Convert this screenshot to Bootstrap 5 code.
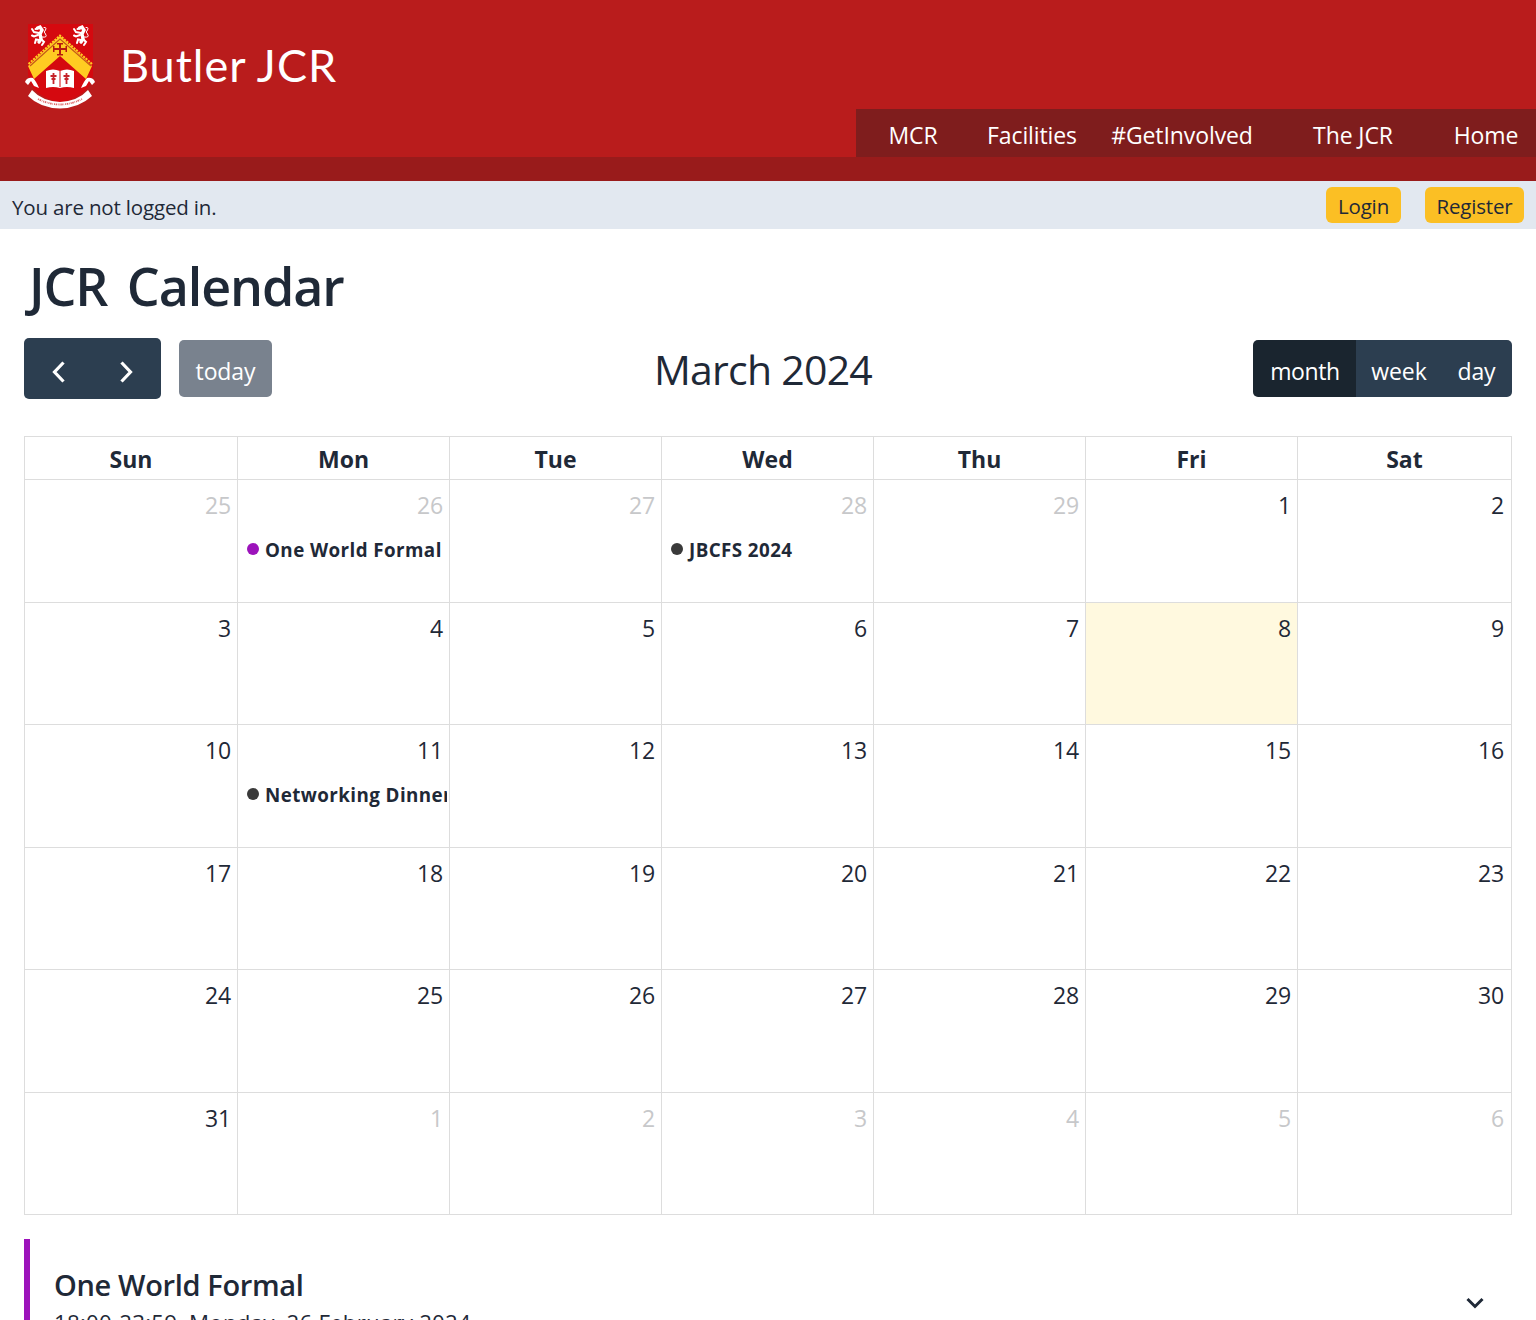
<!DOCTYPE html>
<html lang="en">
<head>
<meta charset="utf-8">
<meta name="viewport" content="width=device-width, initial-scale=1">
<title>Butler JCR - Calendar</title>
<link href="https://cdn.jsdelivr.net/npm/bootstrap@5.3.0/dist/css/bootstrap.min.css" rel="stylesheet">
<style>
html,body{height:1320px;overflow:hidden}
body{font-family:"Open Sans","Noto Sans",sans-serif;font-size:23px;line-height:36px;color:#1f2937;letter-spacing:-.1px}
.site-head{height:157px;background:#b91c1c;color:#fff}
.crest{width:72px;height:88px;margin:22px 0 0 24px}
.brand{font-family:Lato,sans-serif;font-size:45px;line-height:54px;margin:38px 0 0 24px;letter-spacing:1px}
.main-nav{height:48px;margin-top:109px;background:#7f1d1d}
.main-nav a{color:#fff;text-decoration:none;text-align:center;line-height:52px}
.strip{height:24px;background:#991b1b}
.status{height:48px;background:#e2e8f0;padding:0 12px;font-size:20.5px;letter-spacing:-.17px}
.status .btn{height:36px;background:#fbbf24;border:0;border-radius:6px;padding:1px 0 0;font-size:20.5px;line-height:36px;color:#1f2937;letter-spacing:inherit}
.page-title{font-size:52px;line-height:60px;font-weight:600;margin:27px 0 0;padding-left:5px;letter-spacing:-1.1px;word-spacing:7px}
.tools{height:61px;margin-top:22px}
.tools .btn{background:#2c3e50;border:0;border-radius:0;color:#fff;font-size:23px;line-height:36px;padding:4px 0 0;height:57px;letter-spacing:inherit}
.tools .btn-group{border-radius:5px;overflow:hidden}
.tools .arrow{height:61px;padding:4px 0 0}
.tools .btn.picked{background:#1a252f;letter-spacing:-.4px}
.tools .btn.now{background:#79828e;border-radius:5px;width:93px;margin-left:18px}
.month-name{font-size:41px;line-height:60px;font-weight:400;letter-spacing:-.75px;padding-right:10px}
.cal{display:grid;grid-template-columns:213px repeat(5,212px) 214px;grid-template-rows:43px 123px 122px 123px 122px 123px 122px;border:solid #ddd;border-width:1px 0 0 1px;margin-top:37px}
.cal>div{border:solid #ddd;border-width:0 1px 1px 0;text-align:right;padding:7px 6px 0 9px;overflow:hidden;min-width:0}
.cal>.dow{text-align:center;font-weight:700;padding:4px 0 0;letter-spacing:.05px}
.cal .off{color:#c7c8ca}
.cal .today{background:#fff9df}
.cal>div:nth-child(7n):not(.dow){padding-right:7px}
.event{color:#1f2937;font-size:18.8px;font-weight:700;line-height:30px;white-space:nowrap;overflow:hidden;margin:12px -4px 0 0;text-align:left;letter-spacing:.42px}
.event i{flex:none;width:12px;height:12px;border-radius:50%;background:#3a3a3a;margin:0 6px 2px 0}
.event.purple i{background:#9c13bb}
.entry{border-left:6px solid #9c13bb;margin-top:24px;height:81px;padding:27px 28px 0 24px;overflow:hidden}
.entry h2{font-size:29px;line-height:38px;font-weight:600;margin:0;letter-spacing:-.35px}
.entry p{font-size:22.3px;line-height:37px;white-space:nowrap;margin:0;letter-spacing:.2px}
</style>
</head>
<body>
<header class="site-head d-flex">
<svg class="crest flex-shrink-0" viewBox="24 22 72 88">
<path d="M28 24H93V75Q91 95 60 103Q30 95 28 75Z" fill="#d5090f"/>
<path d="M60 36L92 66L86 79L60 56L34 79L28 66Z" fill="#fc2"/>
<path d="M30 66L60 39L91 66" fill="none" stroke="#c4581a" stroke-width="1.200"/>
<path d="M28.500 64L60 35.500L92 64" fill="none" stroke="#fc2" stroke-width="2" stroke-dasharray="2.200 1"/>
<path d="M59 44H61V48H66V50H61V55H59V50H54V48H59ZM57 43H63V44.500H57ZM57 54H63V55.500H57ZM53 46H54.500V52H53ZM65.500 46H67V52H65.500Z" fill="#b51a10"/>
<g id="lion" fill="none" stroke="#fff" stroke-linecap="round">
<path d="M37.500 28L40 27L42 30L40 34L41 39L39 42" stroke-width="3.400"/>
<path d="M38 28.500L35.500 29M39 33L34 32L32 29M38 35L34 36.500L32 35.500M39 40L36 39.500L35 43M41 39L44 42L42 45" stroke-width="2"/>
<path d="M42 37Q48 38 45.500 34Q43 32 45.500 30Q47 27 44 27.500" stroke-width="1"/>
</g>
<use href="#lion" x="42"/>
<path d="M46 71Q53 68 60 71Q67 68 74 71V88Q67 86 60 88Q53 86 46 88Z" fill="#fff"/>
<path d="M60 71V87" stroke="#d5090f"/>
<path d="M53.500 73V84M66.500 73V84M50.500 76H56.500M63.500 76H69.500M51.500 79H55.500M64.500 79H68.500" stroke="#c5232a" stroke-width="1.800"/>
<path d="M25 82Q27 77 33 78Q36 81 39 88L34 86L31 81L28 85ZM95 82Q93 77 87 78Q84 81 81 88L86 86L89 81L92 85Z" fill="#fff"/>
<path d="M32 90Q42 101 60 102Q78 101 88 90L92 96Q79 108 60 108.500Q40 108 28 96Z" fill="#fff"/>
<path d="M38 99Q60 110 82 99" fill="none" stroke="#d66" stroke-width="1.800" stroke-dasharray="1 .7 1.500 .8 .6 1"/>
</svg>
<div class="brand">Butler JCR</div>
<nav class="main-nav d-flex ms-auto">
<a href="#" style="width:114px">MCR</a><a href="#" style="width:124px">Facilities</a><a href="#" style="width:176px">#GetInvolved</a><a href="#" style="width:166px">The JCR</a><a href="#" style="width:100px">Home</a>
</nav>
</header>
<div class="strip"></div>
<div class="status d-flex align-items-center">
<span class="me-auto pt-1 lh-base">You are not logged in.</span>
<a class="btn me-4" style="width:75px" href="#">Login</a><a class="btn" style="width:99px" href="#">Register</a>
</div>
<main class="px-4 pt-0">
<h1 class="page-title">JCR Calendar</h1>
<div class="tools d-flex align-items-center justify-content-between position-relative">
<div class="d-flex align-items-center">
<div class="btn-group">
<button class="btn arrow" style="width:69px" aria-label="Previous"><svg width="36" height="36" viewBox="0 0 36 36" fill="none" stroke="#fff" stroke-width="3.200"><path d="M22.500 8.500L13.500 18L22.500 27.500"/></svg></button>
<button class="btn arrow" style="width:69px" aria-label="Next"><svg width="36" height="36" viewBox="0 0 36 36" fill="none" stroke="#fff" stroke-width="3.200"><path d="M12.500 8.500L21.500 18L12.500 27.500"/></svg></button>
</div>
<button class="btn now">today</button>
</div>
<div class="month-name position-absolute start-0 end-0 text-center pe-none">March 2024</div>
<div class="btn-group">
<button class="btn picked" style="width:104px">month</button><button class="btn" style="width:86px">week</button><button class="btn" style="width:71px">day</button>
</div>
</div>
<section class="cal">
<div class="dow">Sun</div><div class="dow">Mon</div><div class="dow">Tue</div><div class="dow">Wed</div><div class="dow">Thu</div><div class="dow">Fri</div><div class="dow">Sat</div>
<div class="off">25</div><div class="off">26<div class="event purple d-flex align-items-center"><i></i>One World Formal</div></div><div class="off">27</div><div class="off">28<div class="event d-flex align-items-center"><i></i>JBCFS 2024</div></div><div class="off">29</div><div>1</div><div>2</div>
<div>3</div><div>4</div><div>5</div><div>6</div><div>7</div><div class="today">8</div><div>9</div>
<div>10</div><div>11<div class="event d-flex align-items-center"><i></i>Networking Dinner</div></div><div>12</div><div>13</div><div>14</div><div>15</div><div>16</div>
<div>17</div><div>18</div><div>19</div><div>20</div><div>21</div><div>22</div><div>23</div>
<div>24</div><div>25</div><div>26</div><div>27</div><div>28</div><div>29</div><div>30</div>
<div>31</div><div class="off">1</div><div class="off">2</div><div class="off">3</div><div class="off">4</div><div class="off">5</div><div class="off">6</div>
</section>
<article class="entry d-flex justify-content-between">
<div><h2>One World Formal</h2><p>18:00-23:59, Monday, 26 February 2024</p></div>
<svg class="mt-4 pt-1" width="18" height="22" viewBox="0 0 18 18" fill="none" stroke="#1f2937" stroke-width="3"><path d="M1.500 5L9 12.500L16.500 5"/></svg>
</article>
</main>
<script src="https://cdn.jsdelivr.net/npm/bootstrap@5.3.0/dist/js/bootstrap.bundle.min.js"></script>
</body>
</html>
